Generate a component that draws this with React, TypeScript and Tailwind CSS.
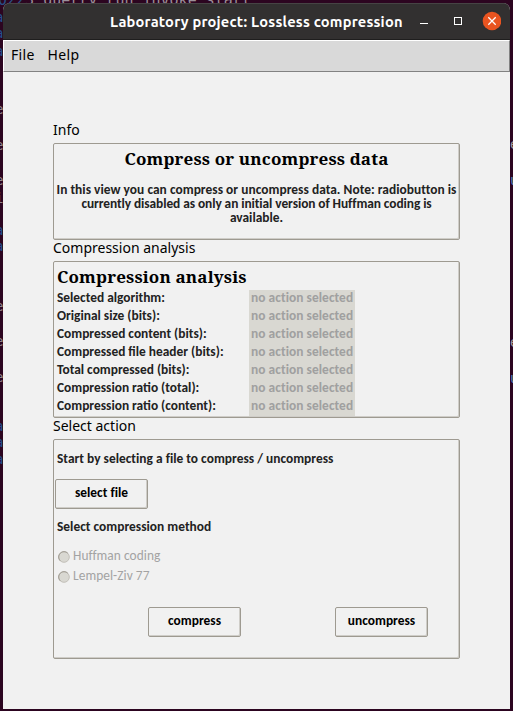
import type { ReactNode } from 'react';

const body = "font-['Carlito','Lato',sans-serif] font-bold text-[13.4px] leading-[14px]";
const heading = "font-['Noto_Serif','DejaVu_Serif_Condensed','DejaVu_Serif',serif] text-[17px] tracking-[0.15px] font-bold text-black";

function Frame({ className, children }: { className: string; children: ReactNode }) {
  return (
    <div className={`w-[407px] rounded-[2px] border border-[#9e9a91] shadow-[inset_-1px_-1px_0_#cfcdc8] ${className}`}>
      {children}
    </div>
  );
}

function Caption({ children, className }: { children: ReactNode; className: string }) {
  return (
    <div className={`whitespace-nowrap font-['Noto_Sans',sans-serif] text-sm text-black ${className}`}>
      <span>{children}</span>
    </div>
  );
}

function Button({ children }: { children: ReactNode }) {
  return (
    <button className={`${body} flex h-[30px] w-[93px] items-center justify-center rounded-[2px] border border-[#9e9a91] pb-[3px] tracking-[0.02px] text-black shadow-[inset_-1px_-1px_0_#cfcdc8]`}>
      {children}
    </button>
  );
}

function Radio({ label }: { label: string }) {
  return (
    <div className="flex h-5 items-center font-['Carlito','Lato',sans-serif] text-[13.4px] tracking-[0.05px] text-[#a3a3a3]">
      <svg width="12" height="12" viewBox="0 0 12 12" className="mt-1 mr-[3.500px] ml-[0.500px]">
        <circle cx="6" cy="6" r="5.3" fill="#d9d8d2" stroke="#c3c0b9" />
        <path d="M2.2 9.8A5.3 5.3 0 0 1 9.8 2.2" fill="none" stroke="#a09c93" />
      </svg>
      <span className="pt-0.5">{label}</span>
    </div>
  );
}

const rows = [
  'Selected algorithm:',
  'Original size (bits):',
  'Compressed content (bits):',
  'Compressed file header (bits):',
  'Total compressed (bits):',
  'Compression ratio (total):',
  'Compression ratio (content):',
];

const leftScraps = [
  { top: 9, text: 'a' }, { top: 25, text: 'a' }, { top: 43, text: 'a' },
  { top: 222, text: 'a' }, { top: 238, text: 'a' }, { top: 418, text: 'a' },
  { top: 434, text: 'a' }, { top: 451, text: 'a' },
];
const paleScraps = [
  { top: 101, text: 'e' }, { top: 137, text: 'e' }, { top: 172, text: 'e' },
  { top: 190, text: 'i' }, { top: 298, text: 'e' }, { top: 333, text: 'e' }, { top: 369, text: 'e' },
];

export default function App() {
  return (
    <div className="relative h-[711px] w-[513px] overflow-hidden bg-[#2c0520] px-[3px] pt-[3px]">
      <div className="absolute -top-[8px] -left-[2px] whitespace-pre font-['DejaVu_Sans_Mono',monospace] text-[15px] leading-4 text-[#9c9099]">
        <span className="text-[#294f86]">022</span>3 querry run invoke start
      </div>
      {leftScraps.map((s) => (
        <span key={s.top} style={{ top: s.top }} className="absolute -left-[5px] font-['DejaVu_Sans_Mono',monospace] text-[14px] leading-4 text-[#23508d]">{s.text}</span>
      ))}
      {paleScraps.map((s) => (
        <span key={s.top} style={{ top: s.top }} className="absolute -left-[5px] font-['DejaVu_Sans_Mono',monospace] text-[14px] leading-4 text-[#8f858d]">{s.text}</span>
      ))}
      {[136, 334].map((top) => (
        <span key={top} style={{ top }} className="absolute left-[510px] font-['DejaVu_Sans_Mono',monospace] text-[14px] leading-4 text-[#a0989e]">e</span>
      ))}
      {[172, 370].map((top) => (
        <span key={top} style={{ top }} className="absolute left-[510px] font-['DejaVu_Sans_Mono',monospace] text-[14px] leading-4 text-[#5584bd]">u</span>
      ))}

      <div className="relative flex h-[706px] w-[507px] flex-col overflow-hidden rounded-t-[7px] bg-[#f1f1f1]">
        <header className="flex h-[37px] shrink-0 items-center border-t border-b border-t-[#464444] border-b-[#1f1e1e] bg-[#323030] pr-[9px] pl-[107px]">
          <h1 className="mt-px w-[300px] whitespace-nowrap font-['Ubuntu','Open_Sans',sans-serif] text-[14.67px] tracking-[0.2px] font-bold text-white"><span>Laboratory project: Lossless compression</span></h1>
          <svg width="91" height="35" viewBox="0 0 91 35" className="ml-auto shrink-0">
            <path d="M10 19.5h8" stroke="#fff" />
            <rect x="44.500" y="13.500" width="7" height="7" fill="none" stroke="#fff" />
            <circle cx="82" cy="17" r="9.300" fill="#e95420" />
            <path d="M78.300 13.300l7.400 7.400M85.700 13.300l-7.400 7.400" stroke="#fff" strokeWidth="1.300" />
          </svg>
        </header>
        <nav className="flex h-8 shrink-0 items-center gap-[13px] border-t border-r border-b border-l border-t-white border-r-[#828282] border-b-[#828282] border-l-white bg-[#d9d9d9] pb-0.5 pl-[7px] font-['Noto_Sans',sans-serif] text-sm tracking-[0.3px] text-black">
          <span>File</span>
          <span>Help</span>
        </nav>

        <main className="flex flex-col pt-[47px] pl-[50px]">
          <Caption className="h-6 leading-[22px]">Info</Caption>
          <Frame className="h-[97px] text-center">
            <h2 className={`${heading} mt-1 leading-[22px]`}><span>Compress or uncompress data</span></h2>
            <div className={`${body} mt-[13px] whitespace-nowrap text-[#222]`}>
              <p className="tracking-[0.04px]">In this view you can compress or uncompress data. Note: radiobutton is</p>
              <p className="tracking-[-0.07px]">currently disabled as only an initial version of Huffman coding is</p>
              <p>available.</p>
            </div>
          </Frame>
          <Caption className="h-[21px] leading-[15px]">Compression analysis</Caption>
          <Frame className="h-[157px] pl-[3px]">
            <h2 className={`${heading} mt-[3px] mb-px leading-[24px]`}><span>Compression analysis</span></h2>
            {rows.map((r) => (
              <div key={r} className={`${body} flex h-[18px] whitespace-nowrap text-[#222]`}>
                <span className="w-[192px] pt-px">{r}</span>
                <span className="w-[106px] bg-[#d9d8d2] pt-px pl-0.5 tracking-[0.06px] text-[#a0a0a0]">no action selected</span>
              </div>
            ))}
          </Frame>
          <Caption className="h-[21px] leading-[15px]">Select action</Caption>
          <Frame className="h-[220px] pt-3">
            <p className={`${body} pl-[3px] tracking-[0.02px] text-[#222]`}><span>Start by selecting a file to compress / uncompress</span></p>
            <div className="mt-[13px] ml-px"><Button>select file</Button></div>
            <p className={`${body} mt-[11px] mb-[11px] pl-[3px] tracking-[0.02px] text-[#222]`}><span>Select compression method</span></p>
            <div className="pl-[3px]">
              <Radio label="Huffman coding" />
              <Radio label="Lempel-Ziv 77" />
            </div>
            <div className="mt-[22px] flex gap-[94px] pl-[94px]">
              <Button>compress</Button>
              <Button>uncompress</Button>
            </div>
          </Frame>
        </main>
      </div>
    </div>
  );
}
